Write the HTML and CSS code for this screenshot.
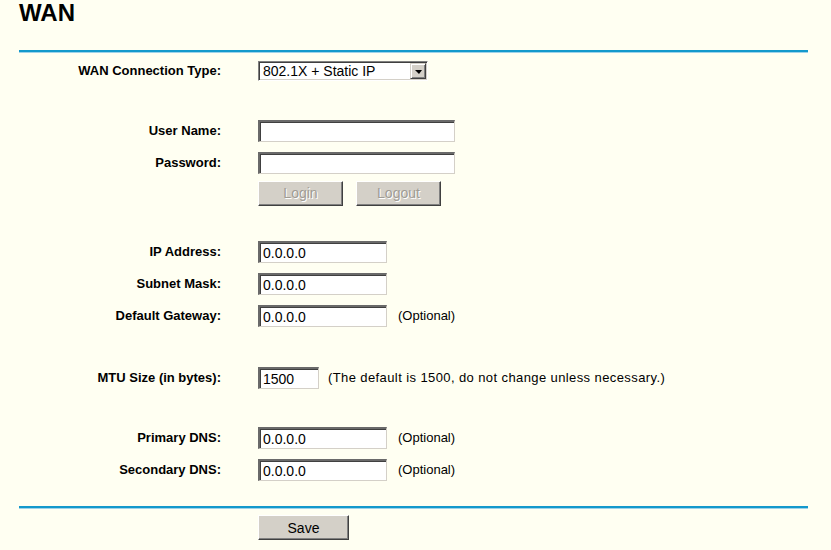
FILE: index.html
```html
<!DOCTYPE html>
<html>
<head>
<meta charset="utf-8">
<title>WAN</title>
<link rel="stylesheet" href="styles.css">
</head>
<body>
<div class="page">
  <h1 class="title">WAN</h1>
  <div class="rule"></div>
  <div class="form">
    <div class="row gap-top">
      <div class="lbl">WAN Connection Type:</div>
      <div class="ctl">
        <div class="select">
          <span class="select-text">802.1X + Static IP</span>
          <span class="select-btn"><span class="tri"></span></span>
        </div>
      </div>
    </div>
    <div class="spacer h28"></div>
    <div class="row">
      <div class="lbl">User Name:</div>
      <div class="ctl"><input class="field w197" type="text" value=""></div>
    </div>
    <div class="row">
      <div class="lbl">Password:</div>
      <div class="ctl"><input class="field w197" type="password" value=""></div>
    </div>
    <div class="row btn-row">
      <div class="lbl"></div>
      <div class="ctl btns">
        <button class="btn w85 disabled" type="button">Login</button>
        <button class="btn w85 disabled" type="button">Logout</button>
      </div>
    </div>
    <div class="spacer h29"></div>
    <div class="row">
      <div class="lbl">IP Address:</div>
      <div class="ctl"><input class="field w129" type="text" value="0.0.0.0"></div>
    </div>
    <div class="row">
      <div class="lbl">Subnet Mask:</div>
      <div class="ctl"><input class="field w129" type="text" value="0.0.0.0"></div>
    </div>
    <div class="row">
      <div class="lbl">Default Gateway:</div>
      <div class="ctl"><input class="field w129" type="text" value="0.0.0.0"><span class="note">(Optional)</span></div>
    </div>
    <div class="spacer h30"></div>
    <div class="row">
      <div class="lbl">MTU Size (in bytes):</div>
      <div class="ctl"><input class="field w61" type="text" value="1500"><span class="note n9">(The default is 1500, do not change unless necessary.)</span></div>
    </div>
    <div class="spacer h28"></div>
    <div class="row">
      <div class="lbl">Primary DNS:</div>
      <div class="ctl"><input class="field w129" type="text" value="0.0.0.0"><span class="note">(Optional)</span></div>
    </div>
    <div class="row">
      <div class="lbl">Secondary DNS:</div>
      <div class="ctl"><input class="field w129" type="text" value="0.0.0.0"><span class="note">(Optional)</span></div>
    </div>
    <div class="spacer h20"></div>
  </div>
  <div class="rule"></div>
  <div class="save-row">
    <div class="lbl"></div>
    <div class="ctl"><button class="btn w91" type="button">Save</button></div>
  </div>
</div>
</body>
</html>
```
FILE: styles.css
```css
html, body {
  margin: 0;
  padding: 0;
  background: #fffff2;
}
body {
  font-family: "Liberation Sans", Arial, sans-serif;
  color: #000;
}
.page {
  width: 831px;
  height: 550px;
  box-sizing: border-box;
  padding: 0 23px 0 19px;
  overflow: hidden;
}
.title {
  margin: 0;
  height: 50px;
  font-size: 24px;
  line-height: 25px;
  font-weight: bold;
}
.rule {
  height: 2px;
  background: #1499cc;
  border-bottom: 1px solid #9fd3ea;
}
.form {
  display: flex;
  flex-direction: column;
}
.row {
  display: flex;
  align-items: center;
  height: 32px;
}
.gap-top {
  margin-top: 2px;
}
.btn-row {
  height: 28px;
}
.spacer.h20 { height: 20px; }
.spacer.h28 { height: 28px; }
.spacer.h29 { height: 29px; }
.spacer.h30 { height: 30px; }
.lbl {
  width: 202px;
  flex: none;
  text-align: right;
  font-size: 13px;
  font-weight: bold;
  line-height: 16px;
  margin-right: 37px;
}
.ctl {
  display: flex;
  align-items: center;
}
.field {
  box-sizing: border-box;
  height: 22px;
  margin: 0;
  padding: 0 0 0 3px;
  background: #fff;
  border-top: 2px solid #6a6a6a;
  border-left: 2px solid #6a6a6a;
  border-right: 1px solid #d4d0c8;
  border-bottom: 1px solid #d4d0c8;
  box-shadow: inset 1px 1px 0 #404040;
  font-family: "Liberation Sans", Arial, sans-serif;
  font-size: 14px;
  color: #000;
  outline: none;
}
.w197 { width: 197px; }
.w129 { width: 129px; }
.w61 { width: 61px; }
.note {
  font-size: 13px;
  margin-left: 11px;
  line-height: 16px;
}
.note.n9 {
  margin-left: 9px;
  letter-spacing: 0.4px;
}
.select {
  box-sizing: border-box;
  width: 170px;
  height: 20px;
  display: flex;
  align-items: stretch;
  background: #fff;
  border-top: 1px solid #808080;
  border-left: 1px solid #808080;
  border-right: 1px solid #fff;
  border-bottom: 1px solid #fff;
  box-shadow: inset 1px 1px 0 #404040, inset -1px -1px 0 #d4d0c8;
}
.select-text {
  flex: 1;
  font-size: 14px;
  line-height: 18px;
  padding-left: 4px;
}
.select-btn {
  width: 16px;
  margin: 1px 1px 1px 0;
  box-sizing: border-box;
  background: #d4d0c8;
  border-top: 1px solid #d4d0c8;
  border-left: 1px solid #d4d0c8;
  border-right: 1px solid #404040;
  border-bottom: 1px solid #404040;
  box-shadow: inset 1px 1px 0 #fff, inset -1px -1px 0 #808080;
  display: flex;
  align-items: center;
  justify-content: center;
}
.tri {
  width: 0;
  height: 0;
  border-left: 4px solid transparent;
  border-right: 3px solid transparent;
  border-top: 4px solid #000;
  margin-top: 1px;
}
.btns {
  gap: 13px;
}
.btn {
  box-sizing: border-box;
  height: 25px;
  margin: 0;
  padding: 0;
  background: #d4d0c8;
  border-top: 1px solid #fff;
  border-left: 1px solid #fff;
  border-right: 1px solid #404040;
  border-bottom: 1px solid #404040;
  box-shadow: inset -1px -1px 0 #808080;
  font-family: "Liberation Sans", Arial, sans-serif;
  font-size: 14px;
  color: #000;
}
.btn.disabled {
  color: #a09c94;
  text-shadow: 1px 1px 0 #fff;
}
.w85 { width: 85px; }
.w91 { width: 91px; }
.save-row {
  display: flex;
  align-items: center;
  margin-top: 6px;
}
.save-row .lbl {
  height: 25px;
}
```
